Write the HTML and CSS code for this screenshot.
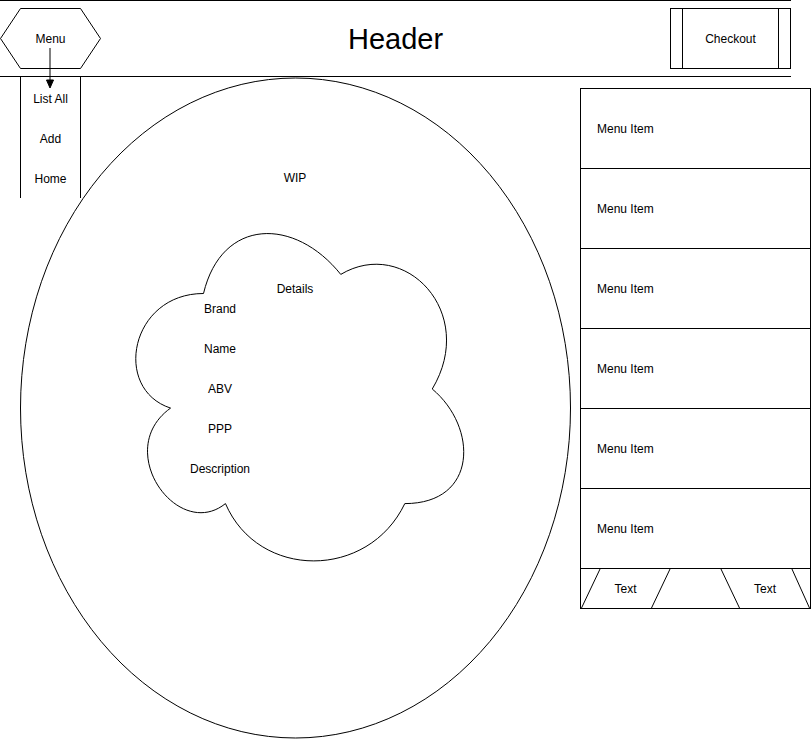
FILE: index.html
```html
<!DOCTYPE html>
<html lang="en">
<head>
  <meta charset="UTF-8">
  <title>Wireframe</title>
  <link rel="stylesheet" href="styles.css">
</head>
<body>
  <div class="page">
    <!-- Top bar: menu hexagon, title, checkout -->
    <div class="header">
      <div class="menu-btn">
        <svg class="hexagon" width="101" height="61" viewBox="0 0 101 61">
          <polygon points="0.5,30.5 20.5,0.5 80.5,0.5 100.5,30.5 80.5,60.5 20.5,60.5" />
        </svg>
        <span class="menu-label">Menu</span>
      </div>
      <div class="title">Header</div>
      <div class="checkout">
        <div class="checkout-inner">Checkout</div>
      </div>
    </div>

    <!-- Arrow from Menu down to the nav list -->
    <svg class="arrow" width="12" height="42" viewBox="0 0 12 42">
      <line x1="6" y1="0" x2="6" y2="34" />
      <polygon points="2.5,32 9.5,32 6,40" />
    </svg>

    <div class="stage">
      <!-- Big ellipse with the WIP area -->
      <svg class="ellipse" width="600" height="662" viewBox="0 0 600 662">
        <ellipse cx="295.5" cy="331" rx="275" ry="330" />
      </svg>
      <div class="wip">WIP</div>

      <div class="cloud">
        <svg class="cloud-shape" width="366" height="382" viewBox="0 0 366 382">
          <path d="M 91.5 95.5 C 18.3 95.5, 0 191, 58.56 210.1 C 0 252.12, 65.88 343.8, 113.46 305.6 C 146.4 382, 256.2 382, 292.8 305.6 C 366 305.6, 366 229.2, 320.25 191 C 366 114.6, 292.8 38.2, 228.75 76.4 C 183 19.1, 109.8 19.1, 91.5 95.5 Z" />
        </svg>
        <div class="cloud-title">Details</div>
        <div class="fields">
          <div class="field">Brand</div>
          <div class="field">Name</div>
          <div class="field">ABV</div>
          <div class="field">PPP</div>
          <div class="field">Description</div>
        </div>
      </div>

      <div class="nav">
        <div class="nav-item">List All</div>
        <div class="nav-item">Add</div>
        <div class="nav-item">Home</div>
      </div>

      <div class="side-menu">
        <div class="side-item">Menu Item</div>
        <div class="side-item">Menu Item</div>
        <div class="side-item">Menu Item</div>
        <div class="side-item">Menu Item</div>
        <div class="side-item">Menu Item</div>
        <div class="side-item">Menu Item</div>
        <div class="side-footer">
          <svg class="slants" width="229" height="39" viewBox="0 0 229 39">
            <line x1="19.5" y1="-1" x2="0.5" y2="39" />
            <line x1="89.5" y1="-1" x2="70.5" y2="39" />
            <line x1="139.5" y1="-1" x2="158.5" y2="39" />
            <line x1="210.5" y1="-1" x2="228.5" y2="39" />
          </svg>
          <span class="footer-cell">Text</span>
          <span class="footer-gap"></span>
          <span class="footer-cell">Text</span>
        </div>
      </div>
    </div>
  </div>
</body>
</html>
```

FILE: styles.css
```css
body {
  margin: 0;
  padding: 0;
  background: #fff;
  color: #000;
  font-family: "Liberation Sans", Arial, sans-serif;
  font-size: 12px;
}
.page {
  position: relative;
  width: 811px;
  height: 739px;
  overflow: hidden;
}
svg {
  overflow: visible;
}
svg polygon,
svg ellipse,
svg path,
svg line {
  fill: none;
  stroke: #000;
  stroke-width: 1;
}
/* Header bar */
.header {
  width: 791px;
  height: 75px;
  border-top: 1px solid #000;
  border-bottom: 1px solid #000;
  display: grid;
  grid-template-columns: 1fr auto 1fr;
  align-items: center;
}
.menu-btn {
  position: relative;
  width: 101px;
  height: 61px;
  display: flex;
  justify-content: center;
  align-items: center;
}
.hexagon {
  position: absolute;
  left: 0;
  top: 0;
}
.menu-label {
  position: relative;
}
.title {
  font-size: 29px;
  line-height: 34px;
}
.checkout {
  justify-self: end;
  width: 121px;
  height: 61px;
  box-sizing: border-box;
  border: 1px solid #000;
  display: flex;
}
.checkout-inner {
  flex: 1;
  margin: 0 11px;
  border-left: 1px solid #000;
  border-right: 1px solid #000;
  display: flex;
  justify-content: center;
  align-items: center;
}
.arrow {
  position: absolute;
  left: 44px;
  top: 48px;
}
.arrow polygon {
  fill: #000;
}
/* Main area */
.stage {
  position: relative;
  height: 662px;
  padding-left: 20px;
  display: flex;
  align-items: flex-start;
}
.ellipse {
  position: absolute;
  left: 0;
  top: 0;
}
.wip {
  position: absolute;
  left: 275px;
  top: 94px;
  width: 40px;
  text-align: center;
}
.cloud {
  position: absolute;
  left: 112px;
  top: 121px;
  width: 366px;
  height: 382px;
}
.cloud-shape {
  position: absolute;
  left: 0;
  top: 0;
}
.cloud-title {
  position: absolute;
  left: 143px;
  top: 84px;
  width: 80px;
  text-align: center;
}
.fields {
  position: absolute;
  left: 58px;
  top: 91px;
  width: 100px;
  display: flex;
  flex-direction: column;
}
.field {
  height: 40px;
  display: flex;
  justify-content: center;
  align-items: center;
}
.nav {
  position: relative;
  width: 61px;
  height: 121px;
  box-sizing: border-box;
  border-left: 1px solid #000;
  border-right: 1px solid #000;
  padding-top: 2px;
}
.nav-item {
  height: 40px;
  display: flex;
  justify-content: center;
  align-items: center;
}
.side-menu {
  position: relative;
  margin-left: auto;
  margin-top: 11px;
  width: 231px;
  box-sizing: border-box;
  border: 1px solid #000;
  background: #fff;
}
.side-item {
  height: 80px;
  box-sizing: border-box;
  border-bottom: 1px solid #000;
  padding-left: 16px;
  display: flex;
  align-items: center;
}
.side-footer {
  position: relative;
  height: 39px;
  display: flex;
  align-items: center;
}
.slants {
  position: absolute;
  left: 0;
  top: 0;
}
.footer-cell {
  width: 89px;
  text-align: center;
}
.footer-gap {
  flex: 1;
}
.footer-cell:last-child {
  width: 90px;
}
```
